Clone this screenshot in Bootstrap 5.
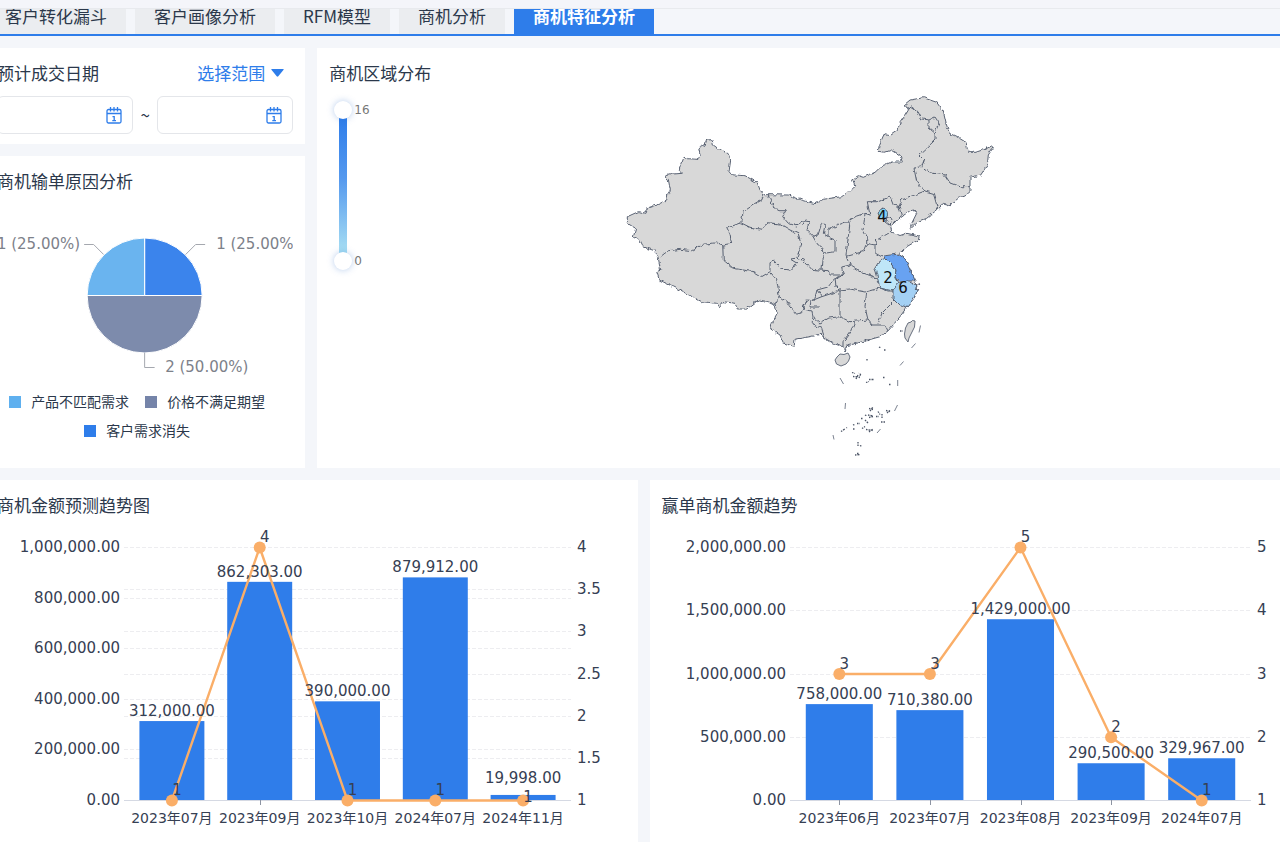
<!DOCTYPE html>
<html lang="zh-CN">
<head>
<meta charset="utf-8">
<meta name="viewport" content="width=device-width, initial-scale=1">
<title>商机特征分析</title>
<link href="https://cdn.jsdelivr.net/npm/bootstrap@5.3.0/dist/css/bootstrap.min.css" rel="stylesheet">
<style>
  :root { --brand: #2e7dea; --ink: #2b384b; --line: #e4e6ea; }
  body { background: #f4f6fa; color: var(--ink); font-family: "Noto Sans CJK SC", sans-serif; font-size: 17px; line-height: 28px; overflow-x: hidden; }
  .topbar { height: 9px; background: #f4f5fa; border-bottom: 1px solid #e8eaee; }
  .tabstrip { height: 27px; gap: 9px; padding-right: 16px; margin-left: -14px; overflow: hidden; border-bottom: 2px solid var(--brand); }
  .tabstrip .nav-link { height: 38px; padding: 0 19px; line-height: 39px; color: var(--ink); background: #ebedf0; white-space: nowrap; }
  .tabstrip .nav-link.active { background: var(--brand); color: #fff; font-weight: 700; }
  .board { margin: 12px -22px 0 -15px; }
  .board > .row { --bs-gutter-x: 12px; --bs-gutter-y: 12px; }
  .stack { gap: 12px; }
  .panel { background: #fff; padding: 12px; min-width: 0; overflow: hidden; }
  .panel-dates { padding-bottom: 10px; }
  .panel h2 { font-size: 17px; line-height: 26px; font-weight: 400; margin: 0 0 2px; }
  .range-pick { color: var(--brand); gap: 6px; margin-right: 9px; line-height: 26px; height: 26px; cursor: pointer; }
  .range-pick select { appearance: none; border: 0; background: none; color: inherit; padding: 0; font: inherit; width: 68px; }
  .datebox { height: 38px; border: 1px solid var(--line); border-radius: 6px; padding: 0 10px; min-width: 0; }
  .datebox input { border: 0; outline: 0; min-width: 0; width: 100%; background: none; }
  .tilde { width: 24px; text-align: center; font-size: 17px; }
  .pie { height: 191px; }
  .figures { font-family: "DejaVu Sans", "Noto Sans CJK SC", sans-serif; font-size: 15px; }
  .keys { font-size: 14px; line-height: 29px; column-gap: 16px; padding-right: 16px; }
  .keys li { gap: 10px; }
  .swatch { width: 12px; height: 12px; }
  .geo { display: grid; grid-template-columns: 1fr minmax(0, 400px) 1fr; align-items: start; }
  .scale { margin: 13px 0 0 5px; gap: 2px; font-size: 12px; line-height: 18px; color: #777; }
  .vrange { position: relative; width: 18px; height: 169px; }
  .vrange::before { content: ""; position: absolute; left: 5px; top: 16px; width: 8px; height: 137px; background: linear-gradient(#2e7dea, #5599ee 45%, #a9e0f3); }
  .vrange input { position: absolute; left: 0; top: 0; width: 169px; height: 18px; margin: 0; appearance: none; background: none; pointer-events: none; transform-origin: 0 0; transform: rotate(-90deg) translateX(-169px); }
  .vrange input::-webkit-slider-thumb { appearance: none; width: 18px; height: 18px; border-radius: 50%; background: #fff; box-shadow: 0 0 7px rgba(46, 110, 200, .35); pointer-events: auto; }
  .china { height: 368px; }
  .chart { height: 310px; }
  .cat { font-size: 14px; }
</style>
</head>
<body>
<div class="topbar"></div>
<nav class="nav tabstrip flex-nowrap align-items-end">
  <a class="nav-link" href="#">客户转化漏斗</a>
  <a class="nav-link" href="#">客户画像分析</a>
  <a class="nav-link" href="#">RFM模型</a>
  <a class="nav-link" href="#">商机分析</a>
  <a class="nav-link active" href="#" aria-current="page">商机特征分析</a>
</nav>

<main class="board">
  <div class="row">
    <div class="col-3 d-flex flex-column stack">
      <section class="panel panel-dates">
        <div class="d-flex justify-content-between">
          <h2 class="text-nowrap">预计成交日期</h2>
          <label class="range-pick d-flex align-items-center">
            <select aria-label="选择范围"><option>选择范围</option></select>
            <svg width="13" height="8" viewBox="0 0 13 8" aria-hidden="true"><path d="M1 0h11q1.400 0 .4 1L7.300 7.300q-.8.900-1.600 0L.6 1Q-.4 0 1 0z" fill="#2e7dea"/></svg>
          </label>
        </div>
        <div class="d-flex align-items-center mt-2">
          <label class="datebox flex-fill d-flex align-items-center">
            <input type="text" aria-label="开始日期">
            <svg class="flex-shrink-0" width="16" height="17" viewBox="0 0 16 17" fill="none" stroke="#2e7dea" stroke-width="1.300" aria-hidden="true"><rect x="1" y="2.500" width="14" height="13.500" rx="1.500"/><path d="M1 6.500h14M4.500 0v4.500M8 0v4.500M11.500 0v4.500M6.500 9.600h1.700v4M6.300 13.700h3.700"/></svg>
          </label>
          <span class="tilde flex-shrink-0">~</span>
          <label class="datebox flex-fill d-flex align-items-center">
            <input type="text" aria-label="结束日期">
            <svg class="flex-shrink-0" width="16" height="17" viewBox="0 0 16 17" fill="none" stroke="#2e7dea" stroke-width="1.300" aria-hidden="true"><rect x="1" y="2.500" width="14" height="13.500" rx="1.500"/><path d="M1 6.500h14M4.500 0v4.500M8 0v4.500M11.500 0v4.500M6.500 9.600h1.700v4M6.300 13.700h3.700"/></svg>
          </label>
        </div>
      </section>

      <section class="panel flex-grow-1">
        <h2>商机输单原因分析</h2>
        <svg class="pie figures d-block w-100" viewBox="0 0 296 191" role="img" aria-label="商机输单原因分析">
          <g stroke="#fff" stroke-width="1">
            <path d="M147.500 99.500V42a57.500 57.500 0 0 1 57.500 57.500z" fill="#3b84ec"/>
            <path d="M147.500 99.500H205a57.500 57.500 0 0 1-115 0z" fill="#7d8bac"/>
            <path d="M147.500 99.500H90A57.500 57.500 0 0 1 147.500 42z" fill="#6ab4ef"/>
          </g>
          <g fill="none" stroke="#a5a8af" stroke-width="1">
            <path d="M106.500 58.500L96.500 48.500H87M188.500 58.500l10-10h9.500M147.500 157v14.500h10"/>
          </g>
          <g fill="#7d818a">
            <text x="83" y="53" text-anchor="end">1 (25.00%)</text>
            <text x="219" y="53">1 (25.00%)</text>
            <text x="168" y="176">2 (50.00%)</text>
          </g>
        </svg>
        <ul class="keys list-unstyled d-flex flex-wrap justify-content-center m-0">
          <li class="d-flex align-items-center"><svg class="swatch"><rect width="12" height="12" fill="#5fb0ef"/></svg>产品不匹配需求</li>
          <li class="d-flex align-items-center"><svg class="swatch"><rect width="12" height="12" fill="#7584a9"/></svg>价格不满足期望</li>
          <li class="d-flex align-items-center"><svg class="swatch"><rect width="12" height="12" fill="#2e7dea"/></svg>客户需求消失</li>
        </ul>
      </section>
    </div>

    <div class="col-9">
      <section class="panel h-100">
        <h2>商机区域分布</h2>
        <div class="geo">
          <div class="scale figures d-flex">
            <div class="vrange">
              <input type="range" min="0" max="16" value="0" aria-label="最小值">
              <input type="range" min="0" max="16" value="16" aria-label="最大值">
            </div>
            <div class="d-flex flex-column justify-content-between"><span>16</span><span>0</span></div>
          </div>
          <svg class="china figures d-block w-100" viewBox="610 88 400 368" role="img" aria-label="商机区域分布">
            <defs>
              <filter id="coast" x="-5%" y="-5%" width="110%" height="110%">
                <feTurbulence type="fractalNoise" baseFrequency=".26" numOctaves="1" seed="4" result="n"/>
                <feDisplacementMap in="SourceGraphic" in2="n" scale="5" xChannelSelector="R" yChannelSelector="G"/>
              </filter>
            </defs>
            <g filter="url(#coast)" fill="#d8d8d8" stroke="#596273" stroke-width="1" stroke-linejoin="round">
              <!-- mainland outline -->
              <path d="M627.3 223.300L627.3 216.700 638.3 211.700 645 213.300 646.7 208.300 658.3 204.300 666.7 200 667.7 194 670.3 190 668.3 179.300 665.3 176 672.7 174 681.3 173.300 679.3 169.300 684 157.300 688.3 158.700 698.3 159.300 700 155 698.7 148.300 705 145 706.7 140 712.3 139.700 713.3 145 720 150 726.7 152.300 730.7 160 729 171.700 731.7 174.700 745 175.700 757.3 182.700 760 190 764 194.700 768.3 194.700 788.3 195 801.7 200 815 203.700 823.3 199.300 841.7 196.700 855 186.700 852.3 179.300 858.3 175.700 863.3 177.300 875 172.300 881.7 166 891.7 162 902.3 162 900 155 891.7 150 885 152.300 878.3 151 879.3 145 884 134.300 890 135.700 897.3 130.700 900 122.700 904.3 116.700 909 109 904 105 910 100 923.3 97.700 936.7 102.300 943.3 111.700 946 123.300 949.3 133.300 956.7 136.700 966 142.300 968.3 152.300 976.7 152.300 983.3 150 991.7 146 993.3 147.300 988.3 155 987.3 165 980.7 175 970 177.300 970 191.700 965 196 958.3 198.300 950 205 943.3 203.300 938.3 209 926.7 218.300 918.3 221.700 910 229.300 911.7 223.300 916.7 213.300 914 210 910 210.700 901.7 216.700 895 222 890.7 226 891.7 232 900 235.500 906.7 233.300 919.3 236 918.3 240 906.7 246.700 898.3 254.300 904 258 908.3 265 913.3 276.700 915 281.700 916.7 290 915 296.700 906.7 307.300 900 316.700 888.3 330.700 880 336.700 868.3 340 856.7 343.300 846.7 345.700 845 352 842.7 346.700 833.3 343.300 825 338.300 820 334.300 810 336.700 795 339.300 794 346.700 783.3 342.700 780 335 770.7 329 772.3 321.700 777.3 313.300 775 305 768.3 301.700 758.3 300 746.7 309 737.3 309 735 303.300 723.3 301.700 719.3 306.700 716.7 303.300 701.7 301.700 673.3 286.700 659.3 280 656.7 271.700 660.7 270 658.3 258.300 654.3 250.700 643.3 246.700 640 240 633.3 237.300 635.7 228.300z"/>
              <!-- provinces with values -->
              <path fill="#7fd0f6" d="M878 214L880 209 883 208 886 210 888 213 886 218 880 219z"/>
              <path fill="#bfe6f8" d="M882 260L878 263 875 268 877 275 878 280 880 288 888 291 893 291 898 283 895 278 896 270 892 265 885 258z"/>
              <path fill="#67a2f1" d="M883 256L898 254 904 258 908 265 910 270 914 278 915 281 908 281 900 282 895 278 896 270 892 265z"/>
              <path fill="#a3d0f4" d="M898 283L908 281 915 285 917 290 914 298 907 307 900 305 893 298 893 291z"/>
              <!-- provincial borders -->
              <g fill="none">
                <path d="M658.3 258.300L668.3 250.700 680.7 249.300 691.7 250.700 703.3 244.300 716.7 242.700 722.7 245 731.7 243.300 730 235 726.7 228.300 740.7 222.700 743.3 211.700 753.3 205 761.7 200 764 194.700"/>
                <path d="M768.3 194.700L773.3 206.700 780 210.700 785.7 210.700 782.7 216.700 788.3 223.300 796.7 226 805 221 809.3 221.700 806.7 230 812.7 236 818 235 821.7 223.300 825 225 823.3 233.300 828 237 828 230 838 225 846.7 221.700 856.7 216 865 213.300 870 215 867.3 201.700 878.3 201.700 890 196.700 893.3 205 899 206.700 901.7 200 910 196.700 925 191 916.7 181.700 914 168.300 921.7 166.700 924 160 919 155 926.7 148 935 140 935 133 929 128 929 120 921.7 119 918 111.700 911.7 107 907 109"/>
                <path d="M929 120L935 117 939 123 935 133M921.7 166.700L925 170 933.3 173.300 945 175 950 183 960 186.700 970 186.700M925 191L933.3 193.300 937.7 208.300M899 206.700L901.7 216.700"/>
                <path d="M740.7 222.700L750 227.300 761.7 229.300 767.3 222.700 780 224 790 230 798.3 234 801.7 245 796.7 258.300 790 259 796.7 263 791.7 270 781.7 269.300 773.3 260 770 261.700 770 271.700 761.7 276.700 753.3 271.700 733.3 268.300 723.3 260 722.7 245"/>
                <path d="M770 271.700L776.7 280 779.3 296.700 775 304M779.3 296.700L786.7 301.700 796.7 314.300 801.7 311.700 806.7 300 814 301 817 290 828 287 835 278 843 275 830 275 828.3 270.700 811.7 269.300 803.3 260 796.7 258.300"/>
                <path d="M812.7 236L816.7 243 825 252 823 260 822 270M828 237L835 240 835 251.700 825 253M850 221.700L848.3 236.700 846 255 850 265 841.7 267 843.3 275M847 256L863 251.700 866.7 243.300 866.7 236.700 863 230 865 213.300M866.7 243.300L875 245 876.7 240 889 233M875 245L875 253 882 257"/>
                <path d="M887 216L892 219 890 225 886 222zM850 265L863 273 878 278.300M835 278L836 286 840 290 850 289 865 292 880 288M817 290L821.7 296.700 833 293 840 290 840 316.700M821.7 296.700L811 301 810 307 820 307M806.7 300L803 309 812 311 813 317 820 323 829 318 840 316.700 850 321.700 868 320 872 325 885 325 888 331M813 317L812 325 821.7 328 823 333 825 338"/>
                <path d="M866.7 292L865 306.700 868 320M855 321.700L851.7 330 843 341.700 843 347M895 300L882 313 878 324M893 291L880 288"/>
              </g>
            </g>
            <!-- Hainan, Taiwan -->
            <path fill="#d8d8d8" stroke="#596273" stroke-width=".9" stroke-linejoin="round" d="M835 360L837 357 840 354 844 354.500 848 353 850 357 848.500 361 846 364 841 366 836.500 364zM908 323L911 322 912.500 320.500 915 321 914.500 327 911 334 909 338 908 342 905 338 904.500 334 905.500 328z"/>
            <!-- dashes and islets of the South China Sea -->
            <g stroke="#596273" stroke-width=".8" fill="none">
              <path d="M840 378l3.500 6M845.500 403l-.5 6M833 435l1 4.500M897.700 380v6M903.500 361.500l-3.500 4M915.500 343.500l-4 4.500M897.500 405l-3 6M880.500 429l-3.500 4M920.500 325.500l-1.500 7"/>
            </g>
            <g stroke="#4d5667" stroke-width="1.300" stroke-dasharray="1.500 1 2 2" fill="none">
              <path d="M879 347l2 1M884 350h2M867 359v1.500M852 372.500l3 1M853 376.500l6 .5M856 379l3-6M859 378l2-5M866 382.500l3-1M869 379.500h5M883 377.500h2M889 384.500h2M886 410.500l4 1M887 413l3-2.500M869 408.500l4 1M870 411l3-4M868 415l5 1M869 417.500l4-1M876 416.500h3M878 411.500l2 3M882 414v4M881 422h4M865 415l2 1M865 420l3 3M861 418.500h1.500M857 423.500h3M853 424.500l2 1M853 429h2M841 431.500l6-4M862 428.500l3-2M866 429.500l7 1M869 432l4-3M858 442v4M860 445.500l2 1M855 455l5-.5M857 453.500h2M900 331h3M916 285l4-1M915 289l4 1M865 341l5-1"/>
            </g>
            <g fill="#111" text-anchor="middle">
              <text x="882" y="222">4</text><text x="888" y="283">2</text><text x="903" y="293">6</text>
            </g>
          </svg>
        </div>
      </section>
    </div>

    <div class="col-6">
      <section class="panel">
        <h2>商机金额预测趋势图</h2>
        <svg class="chart figures d-block w-100" id="forecast" role="img" aria-label="商机金额预测趋势图"></svg>
      </section>
    </div>
    <div class="col-6">
      <section class="panel">
        <h2>赢单商机金额趋势</h2>
        <svg class="chart figures d-block w-100" id="won" role="img" aria-label="赢单商机金额趋势"></svg>
      </section>
    </div>
  </div>
</main>

<script src="https://cdn.jsdelivr.net/npm/bootstrap@5.3.0/dist/js/bootstrap.bundle.min.js"></script>
<script>
  const money = n => n.toLocaleString('en-US', { minimumFractionDigits: 2 });

  // Bars on the left axis, a line of counts on the right axis
  function combo(id, o) {
    const svg = document.getElementById(id);
    const top = 27, base = 280, h = base - top;
    const x0 = o.left, x1 = svg.clientWidth - o.right, band = (x1 - x0) / o.rows.length;
    const yBar = v => base - h * v / o.max;
    const yLine = v => base - h * (v - 1) / (o.countMax - 1);
    const rule = y => `<path d="M${x0 - 4} ${Math.round(y) + .5}H${x1 + 4}" stroke="#ededf0" stroke-dasharray="4 2"/>`;
    const text = (x, y, s, a, c = '') => `<text x="${x}" y="${y + 5}" text-anchor="${a}" class="${c}">${s}</text>`;
    let rules = '', bars = '', dots = '', labels = '', pts = [];
    for (let v = 0; v <= o.max; v += o.step) {
      if (v) rules += rule(yBar(v));
      labels += text(x0 - 8, yBar(v), money(v), 'end');
    }
    for (let v = 1; v <= o.countMax; v += o.countStep) {
      if (v > 1) rules += rule(yLine(v));
      labels += text(x1 + 10, yLine(v), v, 'start');
    }
    rules += `<path d="M${x0 - 4} ${base + .5}H${x1 + 4}" stroke="#d5d9e3"/>`;
    o.rows.forEach(([name, amount, count], i) => {
      const cx = x0 + band * (i + .5), y = yBar(amount), ly = yLine(count), low = h * amount / o.max < 8;
      rules += `<path d="M${Math.round(cx) + .5} ${base}v5" stroke="#8d94a2"/>`;
      bars += `<rect x="${cx - band * .37}" y="${y}" width="${band * .74}" height="${base - y}"/>`;
      pts.push(cx + ',' + (ly + .5));
      dots += `<circle cx="${cx}" cy="${ly + .5}" r="6"/>`;
      labels += text(cx, y - (low ? 17 : 10), money(amount), 'middle') + text(cx + 5, ly - (low ? 3 : 10), count, 'middle') + text(cx, base + 18, name, 'middle', 'cat');
    });
    svg.innerHTML = `${rules}<g fill="#2f7dea">${bars}</g><polyline points="${pts.join(' ')}" fill="none" stroke="#faae68" stroke-width="2.400"/><g fill="#faae68">${dots}</g><g fill="#364053">${labels}</g>`;
  }

  function draw() {
    combo('forecast', { left: 131, right: 59, max: 1000000, step: 200000, countMax: 4, countStep: .5, rows: [
      ['2023年07月', 312000, 1], ['2023年09月', 862303, 4], ['2023年10月', 390000, 1], ['2024年07月', 879912, 1], ['2024年11月', 19998, 1]] });
    combo('won', { left: 132, right: 44, max: 2000000, step: 500000, countMax: 5, countStep: 1, rows: [
      ['2023年06月', 758000, 3], ['2023年07月', 710380, 3], ['2023年08月', 1429000, 5], ['2023年09月', 290500, 2], ['2024年07月', 329967, 1]] });
  }
  draw();
  window.addEventListener('resize', draw);
</script>
</body>
</html>
